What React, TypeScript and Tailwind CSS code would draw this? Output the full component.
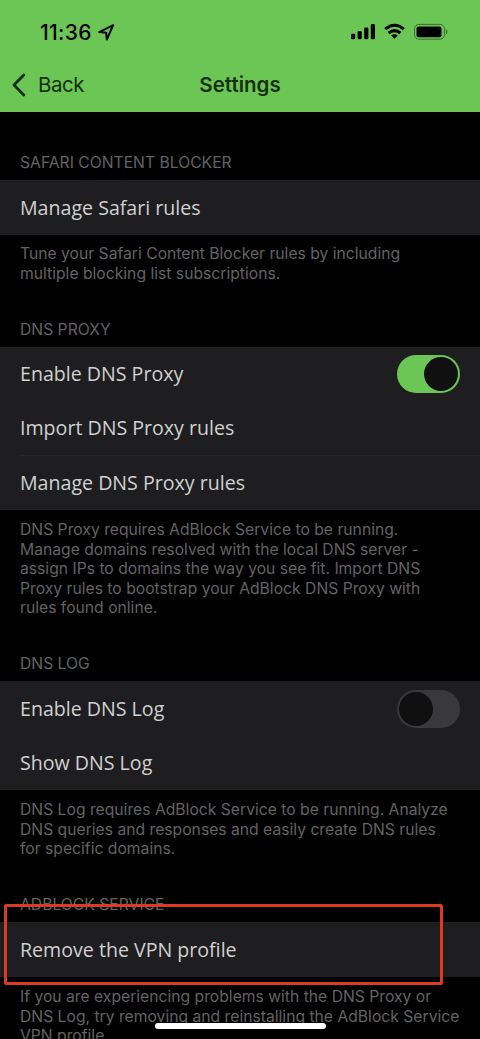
import type { ReactNode } from "react";

function Heading({ children, className }: { children: ReactNode; className: string }) {
  return (
    <h2 className={`flex items-start whitespace-nowrap pl-5 text-[15.7px] font-normal leading-5 text-[#636365] ${className}`}>
      <span>{children}</span>
    </h2>
  );
}

function Row({ children, label, className = "" }: { children?: ReactNode; label: string; className?: string }) {
  return (
    <div className={`flex items-center justify-between pl-5 pr-5 font-['Open_Sans','Noto_Sans',sans-serif] text-[19.6px] text-[#d0d0d1] ${className}`}>
      <span className="whitespace-nowrap">{label}</span>
      {children}
    </div>
  );
}

function Toggle({ on }: { on: boolean }) {
  return (
    <button
      role="switch"
      aria-checked={on}
      className={`flex h-[38px] w-[63px] items-center rounded-full px-[2px] ${on ? "justify-end bg-[#6cc655]" : "justify-start bg-[#39383d]"}`}
    >
      <span className="size-[34px] rounded-full bg-[#101011]" />
    </button>
  );
}

function Note({ lines, className }: { lines: string[]; className: string }) {
  return (
    <div className={`flex flex-col items-start pl-5 text-[15.7px] leading-[19.6px] text-[#636365] ${className}`}>
      {lines.map((line) => (
        <span key={line} className="whitespace-nowrap">{line}</span>
      ))}
    </div>
  );
}

export default function App() {
  return (
    <div className="relative flex h-[1039px] w-[480px] flex-col overflow-hidden bg-black font-['Inter',sans-serif]">
      <header className="h-28 shrink-0 bg-[#6cc655]">
        <div className="flex h-16 items-center pl-10 pr-[32px]">
          <span className="w-[52px] whitespace-nowrap pt-px text-[21px] font-medium leading-6 tracking-[0.3px] text-black">11:36</span>
          <svg className="ml-1.5" width="17" height="17" viewBox="0 0 17 17" fill="none" stroke="black" strokeWidth="2" strokeLinejoin="round">
            <path d="M1.2 8.1 15.2 1.2 8.8 15.5 8.2 8.7Z" />
          </svg>
          <svg className="ml-auto" width="98" height="18" viewBox="0 0 98 18">
            <rect x="1" y="10.8" width="4.2" height="5.4" rx="1.2" />
            <rect x="7.6" y="8.1" width="4.2" height="8.1" rx="1.2" />
            <rect x="14.2" y="4.6" width="4.2" height="11.6" rx="1.2" />
            <rect x="20.8" y="1" width="4.2" height="15.2" rx="1.2" />
            <g fill="none" stroke="black" strokeWidth="3">
              <path d="M35.2 6.1Q44.5-1.7 53.8 6.1" />
              <path d="M38.6 10Q44.5 5.3 50.4 10" />
            </g>
            <path d="M41.2 12.4Q44.5 10 47.8 12.4L44.5 15.8Z" />
            <rect x="64.5" y="1.4" width="30" height="14.8" rx="4.4" fill="none" stroke="#397029" strokeWidth="1" />
            <rect x="66.5" y="3.4" width="25" height="10.8" rx="2" />
            <path d="M96 6.2Q97.5 7 97.5 8.8T96 11.4Z" fill="#397029" />
          </svg>
        </div>
        <nav className="grid h-12 grid-cols-[160px_160px_160px] items-start pt-[9px] text-[20.5px] leading-6 text-[#17300f]">
          <div className="flex items-center pl-3">
            <svg width="14" height="24" viewBox="0 0 14 24" fill="none" stroke="#17300f" strokeWidth="2.8" strokeLinecap="round" strokeLinejoin="round">
              <path d="M11.8 2 2 12l9.8 10" />
            </svg>
            <span className="ml-3 tracking-[-0.5px]">Back</span>
          </div>
          <h1 className="text-center font-semibold">Settings</h1>
        </nav>
      </header>
      <main className="flex flex-col">
        <Heading className="h-[68px] pt-[41px]">SAFARI CONTENT BLOCKER</Heading>
        <div className="bg-[#1e1e20]"><Row className="h-[55px]" label="Manage Safari rules" /></div>
        <Note className="h-[78px] pt-[9px]" lines={["Tune your Safari Content Blocker rules by including", "multiple blocking list subscriptions."]} />
        <Heading className="h-[34px] pt-[7px]">DNS PROXY</Heading>
        <div className="flex h-[163px] flex-col bg-[#1e1e20]">
          <Row className="h-[54px]" label="Enable DNS Proxy"><Toggle on /></Row>
          <Row className="h-[54px]" label="Import DNS Proxy rules" />
          <div className="ml-5 h-0 border-t border-[#262629]" />
          <Row className="h-[54px]" label="Manage DNS Proxy rules" />
        </div>
        <Note className="h-[137px] pt-[10px]" lines={["DNS Proxy requires AdBlock Service to be running.", "Manage domains resolved with the local DNS server -", "assign IPs to domains the way you see fit. Import DNS", "Proxy rules to bootstrap your AdBlock DNS Proxy with", "rules found online."]} />
        <Heading className="h-[34px] pt-[7px]">DNS LOG</Heading>
        <div className="flex h-[109px] flex-col bg-[#1e1e20]">
          <Row className="h-[55px] pt-px" label="Enable DNS Log"><Toggle on={false} /></Row>
          <Row className="h-[54px]" label="Show DNS Log" />
        </div>
        <Note className="h-[98px] pt-[10px]" lines={["DNS Log requires AdBlock Service to be running. Analyze", "DNS queries and responses and easily create DNS rules", "for specific domains."]} />
        <Heading className="h-[34px] pt-[7px]">ADBLOCK SERVICE</Heading>
        <div className="bg-[#1e1e20]"><Row className="h-[55px]" label="Remove the VPN profile" /></div>
        <Note className="h-[62px] pt-[10px]" lines={["If you are experiencing problems with the DNS Proxy or", "DNS Log, try removing and reinstalling the AdBlock Service", "VPN profile."]} />
      </main>
      <div className="absolute left-[4px] top-[904px] h-[81px] w-[439px] rounded-[2px] border-[3px] border-[#d83c23]" />
      <div className="absolute left-[155px] top-[1023px] h-[6px] w-[171px] rounded-full bg-white" />
    </div>
  );
}
